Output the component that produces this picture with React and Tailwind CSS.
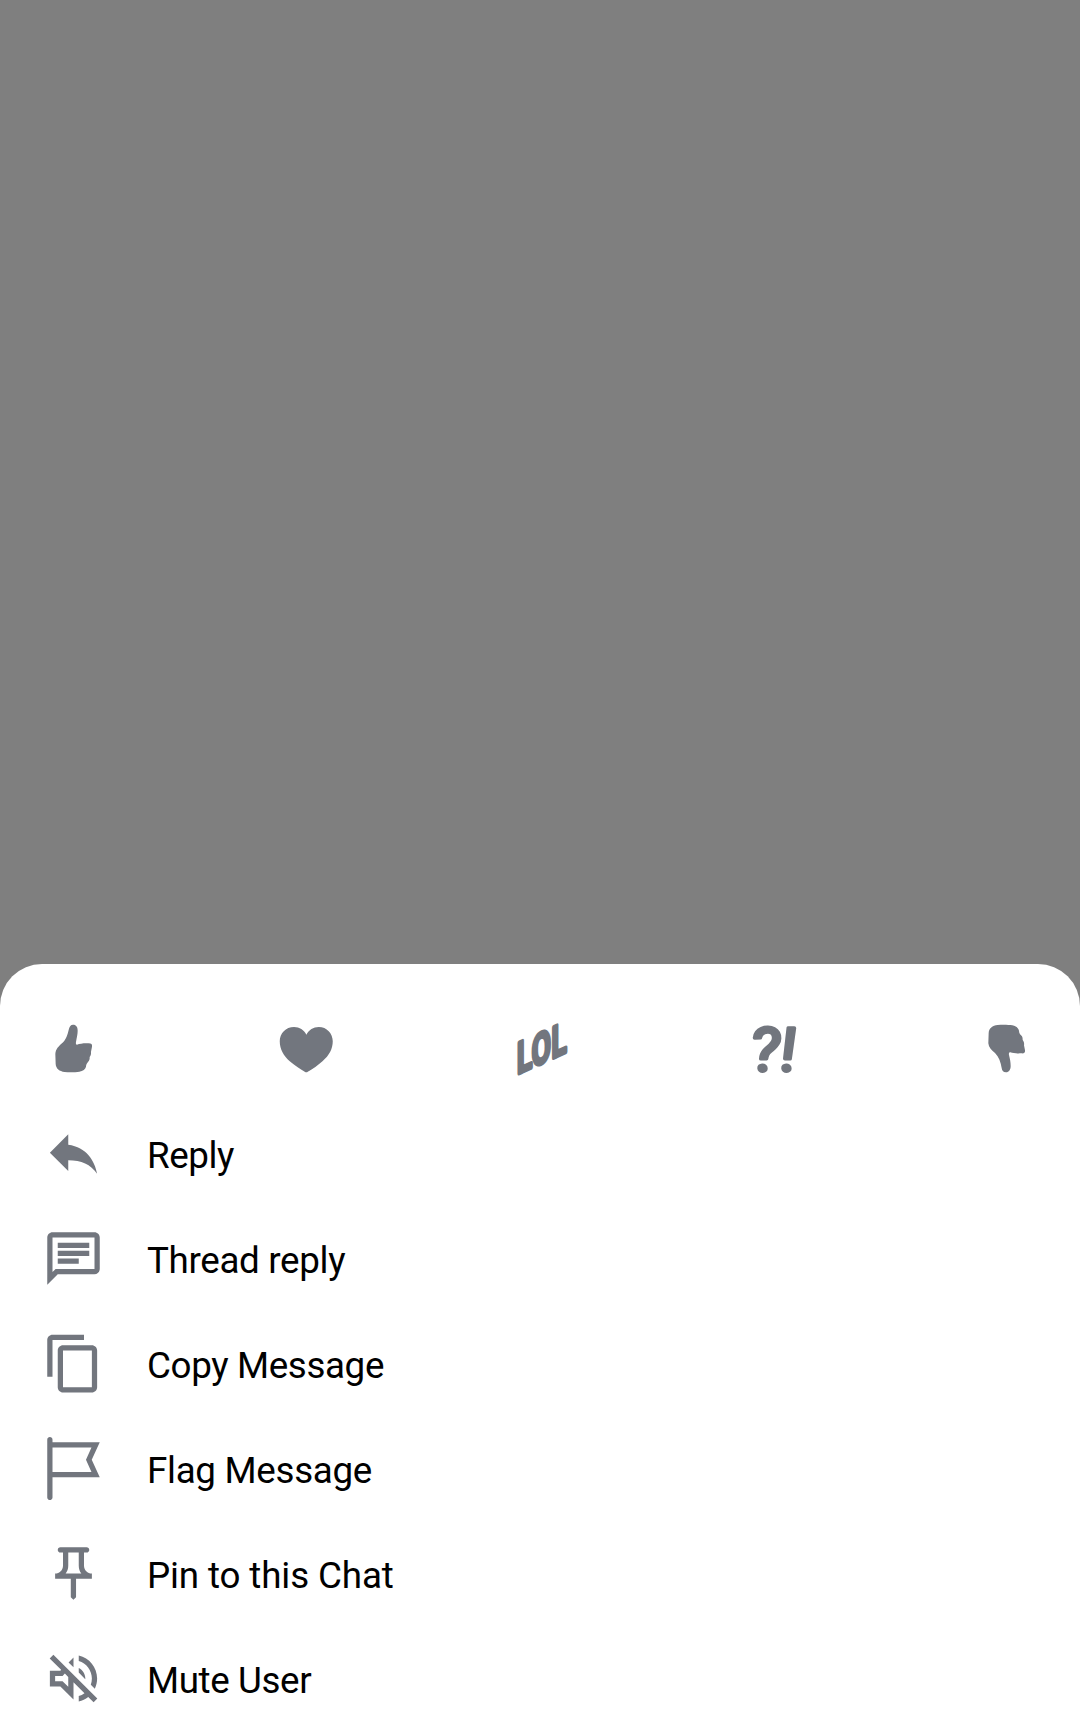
import React from "react";

const reactions = [
  {
    name: "Thumbs up",
    viewBox: "24 21 189 189",
    art: (
      <path d="M117 44C110 44 107 49 105 56C101 73 96 90 84 100C74 109 65 117 64 132L65 162C66 176 76 184 92 186C104 187 124 187 136 185C147 183 154 178 156 170C156 163 159 160 162 156C167 151 167 147 167 141C170 136 172 132 171 125L174 110C175 103 172 100 164 100C150 99 138 101 129 104C126 104 125 101 126 96C128 83 131 73 131 62C131 51 127 44 117 44Z" />
    ),
  },
  {
    name: "Love",
    viewBox: "27.75 21 189 189",
    art: (
      <path d="M122 74C115 60 101 51 85 51C60 51 42 70 42 94C42 118 54 138 72 154C87 167 103 177 117 185Q122 188 126 185C141 177 157 166 171 153C190 137 201 117 201 94C201 70 183 51 159 51C143 51 129 60 122 74Z" />
    ),
  },
  {
    name: "LOL",
    viewBox: "25.5 21 189 189",
    art: (
      <text
        transform="matrix(0.65 -0.293 0 1 50 199)"
        x="-1 67 159"
        y="-7"
        fontFamily="Roboto, sans-serif"
        fontWeight="500"
        fontSize="128"
        stroke="currentColor"
        strokeWidth="14"
        strokeLinejoin="round"
      >
        LOL
      </text>
    ),
  },
  {
    name: "Wut",
    viewBox: "20.25 21 189 189",
    art: (
      <text
        transform="matrix(1.08 0 0.06 1 48 182)"
        x="0 83"
        y="0"
        fontFamily="Roboto, sans-serif"
        fontWeight="400"
        fontStyle="italic"
        fontSize="182"
        stroke="currentColor"
        strokeWidth="10"
        strokeLinejoin="round"
      >
        ?!
      </text>
    ),
  },
  {
    name: "Thumbs down",
    viewBox: "27 21 189 189",
    art: (
      <path d="M120 187C111 187 108 181 107 174C104 157 99 141 87 129C76 121 68 112 67 100L68 69C69 55 79 47 95 45C108 44 127 44 139 46C150 48 157 54 159 62C159 69 162 72 165 76C170 80 170 85 170 90C174 95 175 100 174 106L177 121C178 128 174 131 167 130C153 131 142 130 133 127C129 127 128 130 129 135C132 147 134 157 134 168C134 179 129 187 120 187Z" />
    ),
  },
];

const actions = [
  {
    label: "Reply",
    tracking: "tracking-[-0.4px]",
    d: "M10 8.7V4.7l-7 7 7 7v-4.1c5 0 8.5 1.6 11 5.1-1-5-4-10-11-11z",
  },
  {
    label: "Thread reply",
    tracking: "tracking-[-0.33px]",
    d: "M4 4h16v12H5.17L4 17.17V4m0-2c-1.1 0-1.99.9-1.99 2L2 22l4-4h14c1.1 0 2-.9 2-2V4c0-1.1-.9-2-2-2H4zm2 10h8v2H6v-2zm0-3h12v2H6V9zm0-3h12v2H6V6z",
  },
  {
    label: "Copy Message",
    tracking: "tracking-[-0.37px]",
    d: "M16 1H4c-1.1 0-2 .9-2 2v14h2V3h12V1zm3 4H8c-1.1 0-2 .9-2 2v14c0 1.1.9 2 2 2h11c1.1 0 2-.9 2-2V7c0-1.1-.9-2-2-2zm0 16H8V7h11v14z",
  },
  {
    label: "Flag Message",
    tracking: "tracking-[-0.3px]",
    d: "M3 0c.55 0 1 .45 1 1v1h18l-3.05 6.65L22 15.3H4V23c0 .55-.45 1-1 1s-1-.45-1-1V1c0-.55.45-1 1-1zM4 4v9.3h14.85l-2.1-4.65L18.85 4H4z",
  },
  {
    label: "Pin to this Chat",
    tracking: "tracking-[-0.13px]",
    d: "M14 4v5c0 1.12.37 2.16 1 3H9c.65-.86 1-1.9 1-3V4h4m3-2H7c-.55 0-1 .45-1 1s.45 1 1 1h1v5c0 1.66-1.34 3-3 3v2h5.97v7l1 1 1-1v-7H19v-2c-1.66 0-3-1.34-3-3V4h1c.55 0 1-.45 1-1s-.45-1-1-1z",
  },
  {
    label: "Mute User",
    tracking: "tracking-[-0.38px]",
    d: "M4.34 2.93L2.93 4.34 7.29 8.7 7 9H3v6h4l5 5v-6.59l4.18 4.18c-.65.49-1.38.88-2.18 1.11v2.06c1.34-.3 2.57-.92 3.61-1.75l2.05 2.05 1.41-1.41L4.34 2.93zM10 15.17L7.83 13H5v-2h2.83l.88-.88L10 11.41v3.76zM19 12c0 .82-.15 1.61-.41 2.34l1.53 1.53c.56-1.17.88-2.48.88-3.87 0-4.28-2.99-7.86-7-8.77v2.06c2.89.86 5 3.54 5 6.71zm-7-8l-1.88 1.88L12 7.76zm4.5 8c0-1.77-1.02-3.29-2.5-4.03v1.79l2.48 2.48c.01-.08.02-.16.02-.24z",
  },
];

export default function App() {
  return (
    <div className="flex h-[1731px] w-[1080px] flex-col justify-end overflow-hidden bg-[#7f7f7f] font-['Roboto',sans-serif]">
      <div className="h-[767px] rounded-t-[42px] bg-white text-[#72767e]">
        <div className="flex justify-between px-[42px] pt-[53px]">
          {reactions.map((r) => (
            <button key={r.name} aria-label={r.name} className="size-[63px]">
              <svg viewBox={r.viewBox} className="size-[63px] overflow-visible" fill="currentColor">
                {r.art}
              </svg>
            </button>
          ))}
        </div>
        <div className="flex flex-col pt-5">
          {actions.map((a) => (
            <div key={a.label} className="flex h-[105px] items-center gap-[42px] px-[42px]">
              <svg viewBox="0 0 24 24" className="mt-px size-[63px] shrink-0" fill="currentColor">
                <path d={a.d} />
              </svg>
              <span className={"pt-[5px] text-[36.75px] leading-[43px] text-black " + a.tracking}>{a.label}</span>
            </div>
          ))}
        </div>
      </div>
    </div>
  );
}
